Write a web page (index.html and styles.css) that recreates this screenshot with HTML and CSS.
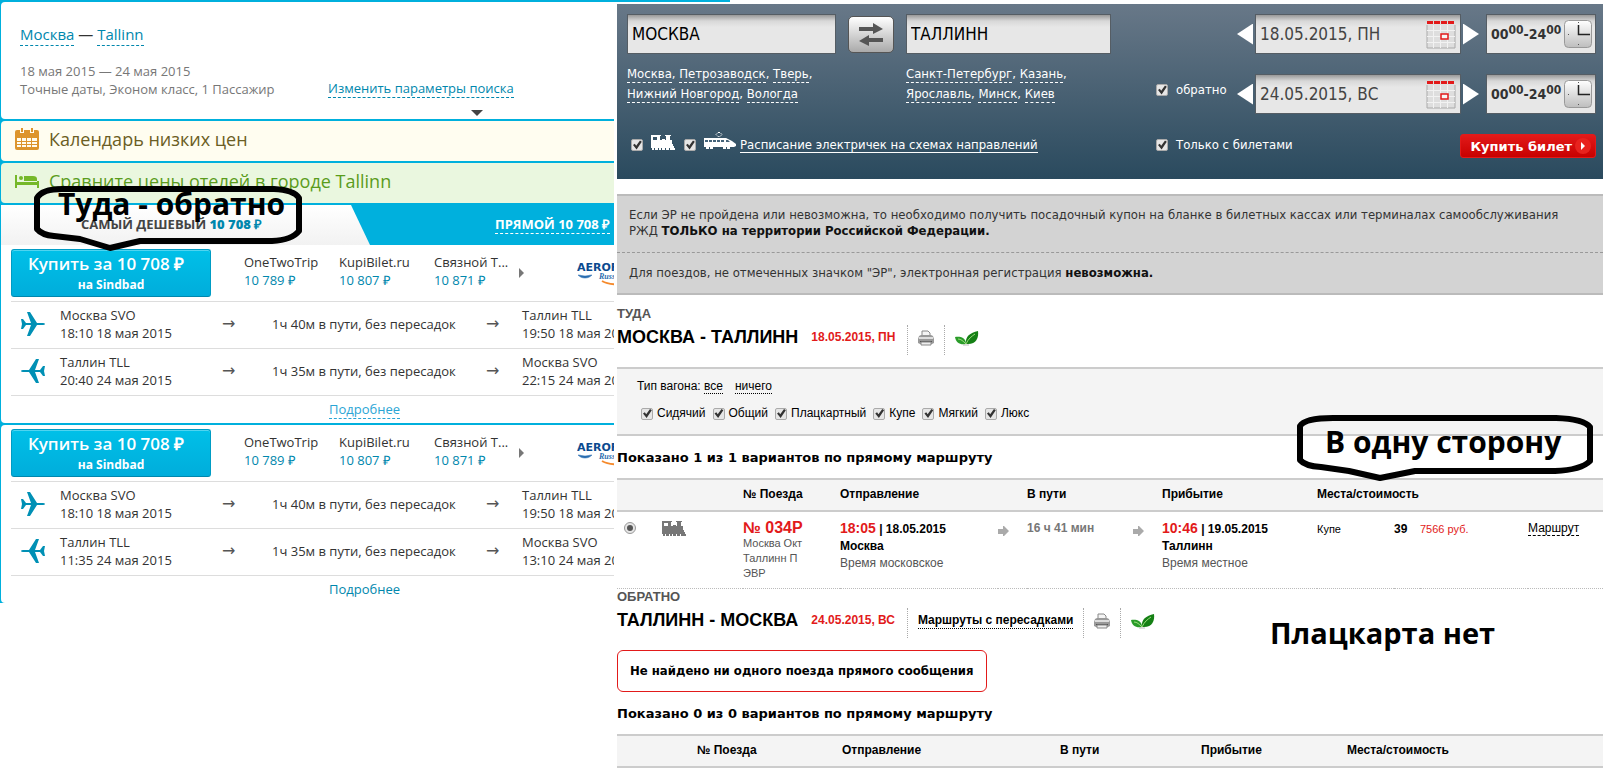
FILE: index.html
```
<!DOCTYPE html>
<html lang="ru">
<head>
<meta charset="utf-8">
<title>Москва — Таллинн: билеты</title>
<link rel="stylesheet" href="styles.css">
</head>
<body>
<svg class="defs" aria-hidden="true">
  <symbol id="plane" viewBox="0 0 24 24"><path d="M0 7h2l3 4h5L6 0h3l7 11h5c1.700 0 3 .4 3 1s-1.300 1-3 1h-5L9 24H6l4-11H5l-3 4H0l1-5z"/></symbol>
  <symbol id="loco" viewBox="0 0 25 15"><path d="M0 0h10v1H9v4h2V4h3v1h1V1h-1V0h6v1h-1v4h2v4h1v2h1v2h1v2h-5v-2h-1v2h-3v-2h-1v2h-3v-2h-1v2H8v-2H7v2H4v-2H3v2H1v-2H0zM2 2v3h4V2z" fill-rule="evenodd"/></symbol>
  <symbol id="arrow" viewBox="0 0 11 10"><path d="M0 3h5V0h1l5 5-5 5H5V8H0z"/></symbol>
  <symbol id="printer" viewBox="0 0 16 16"><path d="M4 6V1h6l2 2v3z" fill="#f4f4f4" stroke="#888"/><path d="M1 6l2-1h10l2 1 1 3v4l-2 1H2l-2-1V9z" fill="#999"/><path d="M1 7h14v2H1z" fill="#ddd"/><path d="M2 11h12v1H2z" fill="#555"/><path d="M3 12h10v3H3z" fill="#eee" stroke="#888"/></symbol>
  <symbol id="leaf" viewBox="0 0 24 16"><path d="M0 7c4-1 11 0 11 7C5 15 1 13 0 7z" fill="#2a9c2a"/><path d="M11 14C10 6 15 3 23 1c1 7-2 14-12 13z" fill="#158015"/><path d="M3 9c3 0 5 2 8 5 2-5 6-8 9-10" fill="none" stroke="#9bdc7a"/><path d="M8 15h6" stroke="#bbb"/></symbol>
  <symbol id="cal" viewBox="0 0 30 29"><path d="M1 5h28v23H1z" fill="#dedede"/><path d="M1 5v23h28V5" fill="none" stroke="#aaa"/><path d="M1 10.500h28M1 16.500h28M1 22.500h28M7.500 5v23M14.500 5v23M21.500 5v23" fill="none" stroke="#f2f2f2"/><path d="M1 1h6v3H1zM8 1h6v3H8zM15 1h6v3h-6zM22 1h6v3h-6z" fill="#e21a1a"/><path d="M15 14h7v5h-7z" fill="#f5f5f5" stroke="#e21a1a" stroke-width="1.500"/></symbol>
  <symbol id="clock" viewBox="0 0 28 28"><rect x=".5" y=".5" width="27" height="27" rx="4" fill="url(#metal)" stroke="#999"/><path d="M14.500 5v9.500H26" fill="none" stroke="#222" stroke-width="1.500"/><path d="M14 2h1v1h-1zM4 14h1v1H4zM14 24h1v1h-1z" fill="#555"/></symbol>
  <linearGradient id="metal" x2="0" y2="1"><stop stop-color="#fff"/><stop offset="1" stop-color="#bdbdbd"/></linearGradient>
  <symbol id="aeroflot" viewBox="0 0 60 26"><text x="0" y="11" font-family="DejaVu Sans" font-size="11" font-weight="700" fill="#0b4a8f">AEROFLOT</text><path d="M1 15c3 0 4 1 7 1 3 0 4-1 7-1-2 2-4 3-7 3s-5-1-7-3z" fill="#2a6db0" stroke="#2a6db0" stroke-width=".5"/><text x="22" y="19" font-family="Liberation Serif" font-style="italic" font-weight="700" font-size="8" fill="#2a6db0">Russian Airlines</text><path d="M25 21c5 3 12 4 22 3" fill="none" stroke="#f58a2c" stroke-width="2"/></symbol>
</svg>
<div class="topline"></div>
<div class="page">
<main class="avia">
  <section class="card search">
    <h1 class="route"><a href="#">Москва</a> — <a href="#">Tallinn</a></h1>
    <div class="params">
      <p>18 мая 2015 — 24 мая 2015<br>Точные даты, Эконом класс, 1 Пассажир</p>
      <a href="#">Изменить параметры поиска</a>
    </div>
    <i class="caret"></i>
  </section>
  <a class="card promo promo-cal" href="#">
    <svg width="24" height="22" viewBox="0 0 24 22"><path d="M0 4q0-2 2-2h20q2 0 2 2v16q0 2-2 2H2q-2 0-2-2z" fill="#dd952c"/><path d="M5 0h4v5H5zM15 0h4v5h-4z" fill="#fffdf0"/><path d="M6 0h2v4H6zM16 0h2v4h-2z" fill="#dd952c"/><path d="M2 10h20v9H2z" fill="#fffdf0"/><path d="M2 13h20v1H2zM2 16h20v1H2zM6 10h1v9H6zM11 10h1v9h-1zM16 10h1v9h-1z" fill="#dd952c"/></svg>
    <span>Календарь низких цен</span>
  </a>
  <a class="card promo promo-hotel" href="#">
    <svg width="24" height="22" viewBox="0 0 24 22" fill="#76b82a"><path d="M0 5h2v7h20v-1h2v7h-2v-3H2v3H0z"/><circle cx="6" cy="8" r="2"/><path d="M9 6h9q4 0 4 3v2H9z"/></svg>
    <span>Сравните цены отелей в городе Tallinn</span>
  </a>
  <nav class="tabs">
    <a class="tab tab-on" href="#">САМЫЙ ДЕШЕВЫЙ <b>10 708 ₽</b></a>
    <a class="tab tab-direct" href="#"><span>ПРЯМОЙ 10 708 ₽</span></a>
  </nav>
  <article class="card ticket">
    <div class="offers">
      <button class="buy"><span>Купить за 10 708 ₽</span><small>на Sindbad</small></button>
      <p>OneTwoTrip<br><a href="#">10 789 ₽</a></p>
      <p>KupiBilet.ru<br><a href="#">10 807 ₽</a></p>
      <p>Связной Т...<br><a href="#">10 871 ₽</a></p>
      <i class="more"></i>
      <svg width="60" height="26"><use href="#aeroflot"/></svg>
    </div>
    <div class="leg">
      <svg width="24" height="24"><use href="#plane"/></svg>
      <p>Москва SVO<br>18:10 18 мая 2015</p><i>→</i><p>1ч 40м в пути, без пересадок</p><i>→</i><p>Таллин TLL<br>19:50 18 мая 2015</p>
    </div>
    <div class="leg">
      <svg class="back" width="24" height="24"><use href="#plane"/></svg>
      <p>Таллин TLL<br>20:40 24 мая 2015</p><i>→</i><p>1ч 35м в пути, без пересадок</p><i>→</i><p>Москва SVO<br>22:15 24 мая 2015</p>
    </div>
    <div class="details"><a class="hover" href="#">Подробнее</a></div>
  </article>
  <article class="card ticket">
    <div class="offers">
      <button class="buy"><span>Купить за 10 708 ₽</span><small>на Sindbad</small></button>
      <p>OneTwoTrip<br><a href="#">10 789 ₽</a></p>
      <p>KupiBilet.ru<br><a href="#">10 807 ₽</a></p>
      <p>Связной Т...<br><a href="#">10 871 ₽</a></p>
      <i class="more"></i>
      <svg width="60" height="26"><use href="#aeroflot"/></svg>
    </div>
    <div class="leg">
      <svg width="24" height="24"><use href="#plane"/></svg>
      <p>Москва SVO<br>18:10 18 мая 2015</p><i>→</i><p>1ч 40м в пути, без пересадок</p><i>→</i><p>Таллин TLL<br>19:50 18 мая 2015</p>
    </div>
    <div class="leg">
      <svg class="back" width="24" height="24"><use href="#plane"/></svg>
      <p>Таллин TLL<br>11:35 24 мая 2015</p><i>→</i><p>1ч 35м в пути, без пересадок</p><i>→</i><p>Москва SVO<br>13:10 24 мая 2015</p>
    </div>
    <div class="details"><a href="#">Подробнее</a></div>
  </article>
</main>

<section class="rail">
  <form class="finder">
    <div class="places">
      <input class="field" type="text" value="МОСКВА" aria-label="Откуда">
      <button class="swap" type="button" aria-label="Поменять местами"><svg width="26" height="24" viewBox="0 0 26 24" fill="#555"><path d="M1 4h14V0l10 6-10 5V8H1zM25 15H11v-3L1 18l10 5v-4h14z"/></svg></button>
      <input class="field" type="text" value="ТАЛЛИНН" aria-label="Куда">
      <p class="cities"><a href="#">Москва</a>, <a href="#">Петрозаводск</a>, <a href="#">Тверь</a>,<br><a href="#">Нижний Новгород</a>, <a href="#">Вологда</a></p>
      <p class="cities cities-to"><a href="#">Санкт-Петербург</a>, <a href="#">Казань</a>,<br><a href="#">Ярославль</a>, <a href="#">Минск</a>, <a href="#">Киев</a></p>
      <div class="kinds">
        <input type="checkbox" checked aria-label="Поезда">
        <svg width="25" height="15" fill="#fff"><use href="#loco"/></svg>
        <input type="checkbox" checked aria-label="Электрички">
        <svg class="emu" width="32" height="18" viewBox="0 0 32 18"><path d="M14 .5h2l2 2-2 2h-2l-2-2z" fill="none" stroke="#fff" stroke-dasharray="2 1"/><path d="M0 6h22l6 3 4 3v2l-2 1H0z" fill="#fff"/><path d="M1 8h3v2H1zM5 8h3v2H5zM9 8h3v2H9zM13 8h3v2h-3zM17 8h3v2h-3zM22 8h2l2 2h-4z" fill="#45647a"/><path d="M2 15h3v2H2zM6 15h3v2H6zM19 15h3v2h-3zM23 15h3v2h-3z" fill="#fff"/></svg>
        <a href="#">Расписание электричек на схемах направлений</a>
      </div>
    </div>
    <div class="dates">
      <span></span>
      <button class="step prev" type="button" aria-label="Предыдущий день"></button>
      <div class="field datebox"><input type="text" value="18.05.2015, ПН" aria-label="Дата туда"><svg width="30" height="29"><use href="#cal"/></svg></div>
      <button class="step next" type="button" aria-label="Следующий день"></button>
      <button class="field time" type="button"><span>00<sup>00</sup>-24<sup>00</sup></span><svg width="28" height="28"><use href="#clock"/></svg></button>
      <label><input type="checkbox" checked>обратно</label>
      <button class="step prev" type="button" aria-label="Предыдущий день"></button>
      <div class="field datebox"><input type="text" value="24.05.2015, ВС" aria-label="Дата обратно"><svg width="30" height="29"><use href="#cal"/></svg></div>
      <button class="step next" type="button" aria-label="Следующий день"></button>
      <button class="field time" type="button"><span>00<sup>00</sup>-24<sup>00</sup></span><svg width="28" height="28"><use href="#clock"/></svg></button>
      <div class="submit">
        <label><input type="checkbox" checked>Только с билетами</label>
        <button class="go">Купить билет<svg width="16" height="16" viewBox="0 0 16 16"><circle cx="8" cy="8" r="8" fill="#e8221e"/><path d="M6 4l4 4-4 4z" fill="#fff"/></svg></button>
      </div>
    </div>
  </form>

  <div class="notice">
    <p>Если ЭР не пройдена или невозможна, то необходимо получить посадочный купон на бланке в билетных кассах или терминалах самообслуживания РЖД <b>ТОЛЬКО на территории Российской Федерации.</b></p>
    <p>Для поездов, не отмеченных значком "ЭР", электронная регистрация <b>невозможна.</b></p>
  </div>

  <h3 class="dir">ТУДА</h3>
  <div class="trip">
    <h2>МОСКВА - ТАЛЛИНН</h2><b class="date">18.05.2015, ПН</b>
    <a class="tool" href="#" aria-label="Печать"><svg width="16" height="16"><use href="#printer"/></svg></a>
    <a class="tool" href="#" aria-label="Экология"><svg width="24" height="16"><use href="#leaf"/></svg></a>
  </div>
  <div class="filter">
    <p>Тип вагона: <a href="#">все</a><a class="none" href="#">ничего</a></p>
    <div class="types">
      <label><input type="checkbox" checked>Сидячий</label>
      <label><input type="checkbox" checked>Общий</label>
      <label><input type="checkbox" checked>Плацкартный</label>
      <label><input type="checkbox" checked>Купе</label>
      <label><input type="checkbox" checked>Мягкий</label>
      <label><input type="checkbox" checked>Люкс</label>
    </div>
  </div>
  <h3 class="shown">Показано 1 из 1 вариантов по прямому маршруту</h3>
  <table class="trains">
    <colgroup><col class="w45"><col class="w81"><col class="w97"><col class="w158"><col class="w29"><col class="w106"><col class="w29"><col class="w155"><col class="w77"><col class="w26"><col class="w108"><col></colgroup>
    <thead><tr><th></th><th></th><th>№ Поезда</th><th>Отправление</th><th></th><th>В пути</th><th></th><th>Прибытие</th><th colspan="4">Места/стоимость</th></tr></thead>
    <tbody><tr>
      <td><input type="radio" name="train" checked aria-label="Поезд 034Р"></td>
      <td><svg class="loco" width="25" height="15"><use href="#loco"/></svg></td>
      <td><b class="num">№ 034Р</b><span class="line">Москва Окт Таллинн П ЭВР</span></td>
      <td><b><em>18:05</em> | 18.05.2015<br>Москва</b><br>Время московское</td>
      <td><svg class="arr" width="11" height="10"><use href="#arrow"/></svg></td>
      <td><b class="dur">16 ч 41 мин</b></td>
      <td><svg class="arr" width="11" height="10"><use href="#arrow"/></svg></td>
      <td><b><em>10:46</em> | 19.05.2015<br>Таллинн</b><br>Время местное</td>
      <td class="seat">Купе</td><td class="seat"><b>39</b></td><td class="seat price">7566 руб.</td>
      <td><a class="way" href="#">Маршрут</a></td>
    </tr></tbody>
  </table>

  <h3 class="dir">ОБРАТНО</h3>
  <div class="trip">
    <h2>ТАЛЛИНН - МОСКВА</h2><b class="date">24.05.2015, ВС</b>
    <span class="tool"><a class="change" href="#">Маршруты с пересадками</a></span>
    <a class="tool" href="#" aria-label="Печать"><svg width="16" height="16"><use href="#printer"/></svg></a>
    <a class="tool" href="#" aria-label="Экология"><svg width="24" height="16"><use href="#leaf"/></svg></a>
  </div>
  <p class="alert">Не найдено ни одного поезда прямого сообщения</p>
  <h3 class="shown">Показано 0 из 0 вариантов по прямому маршруту</h3>
  <table class="trains">
    <colgroup><col class="w80"><col class="w145"><col class="w218"><col class="w141"><col class="w146"><col></colgroup>
    <thead><tr><th></th><th>№ Поезда</th><th>Отправление</th><th>В пути</th><th>Прибытие</th><th>Места/стоимость</th></tr></thead>
  </table>
  <div class="callout one-way"><svg width="296" height="66" viewBox="0 0 296 66"><path d="M3 11Q8 3 36 3H259Q287 4 293 12V46Q284 55 258 56H118L83 63 52 56 24 52Q8 51 3 45z"/></svg><span>В одну сторону</span></div>
  <div class="callout no-seats"><span>Плацкарта нет</span></div>
</section>
</div>
<div class="callout round-trip"><svg width="268" height="66" viewBox="0 0 268 66"><path d="M3 12Q8 3 28 3H240Q260 4 265 12V45Q258 54 238 55H106L76 62 46 53 20 50Q8 49 3 43z"/></svg><span>Туда - обратно</span></div>
</body>
</html>
```

FILE: styles.css
```
* { box-sizing: border-box; }
body { margin: 0; background: #fff; position: relative; font: 13px/18px "Open Sans", sans-serif; color: #333; overflow-x: hidden; }
p, h1, h2, h3 { margin: 0; }
i, em { font-style: normal; }
button { border: 0; padding: 0; font: inherit; cursor: pointer; }
svg { display: block; flex: none; }
.defs { position: absolute; width: 0; height: 0; }
.topline { position: absolute; top: 0; left: 0; width: 730px; max-width: 100%; height: 2px; background: #00b0dd; }
.page { display: grid; grid-template-columns: minmax(0, 614fr) minmax(0, 986fr); gap: 3px; align-items: start; }

.avia { background: #00b0dd; padding: 2px 0 0 1px; display: flex; flex-direction: column; gap: 2px; overflow: hidden; white-space: nowrap; }
.avia a { color: #0087ad; text-decoration: none; }
.card { background: #fff; border-radius: 4px 0 0 4px; }
.search { height: 117px; padding: 21px 0 0 19px; position: relative; }
.route { font-size: 15px; line-height: 22px; font-weight: 400; }
.route a, .params a { border-bottom: 1px dashed #0087ad; }
.avia .route a { padding-bottom: 1px; }
.params { display: flex; align-items: flex-end; margin-top: 17px; color: #777; }
.params p { width: 308px; }
.caret { position: absolute; left: 470px; bottom: 3px; border: 6px solid transparent; border-top-color: #444; border-bottom-width: 0; }
.promo { height: 40px; display: flex; align-items: center; gap: 10px; padding: 0 14px 4px; font-size: 18px; }
.avia .promo-cal { background: #fffdf0; color: #6b5d24; }
.avia .promo-hotel { background: #eaf7df; color: #5a9c1c; }
.tabs { height: 40px; display: flex; font-weight: 700; line-height: 38px; }
.tab-on { width: 369px; padding-left: 80px; background: linear-gradient(#fff, #f2f2f2); clip-path: polygon(0 0, 350px 0, 100% 100%, 0 100%); }
.avia .tab-on { color: #444; }
.tab-on b { color: #0087ad; }
.tab-direct { padding-left: 125px; }
.tab-direct span { color: #fff; border-bottom: 1px dashed #fff; }
.tabs + .ticket { margin-top: -2px; border-top-left-radius: 0; }
.ticket { padding: 4px 0 0 10px; height: 178px; }
.offers { display: grid; grid-template-columns: 233px 95px 95px 85px 58px 60px; height: 53px; padding-bottom: 4px; align-items: center; border-bottom: 1px solid #ddd; }
.offers p { padding-bottom: 4px; }
.buy { width: 200px; height: 48px; border: 1px solid #009cc4; border-bottom-color: #0087ad; border-radius: 3px; background: linear-gradient(#00c0e8, #00addb); box-shadow: inset 0 1px #4fd4f0; color: #fff; font-weight: 600; }
.buy span { display: block; font-size: 17px; line-height: 24px; padding-right: 10px; }
.buy small { display: block; font-size: 12px; font-weight: 700; line-height: 18px; }
.more { border: 5px solid transparent; border-left-color: #777; border-right-width: 0; width: 5px; }
.leg { display: grid; grid-template-columns: 39px 162px 50px 214px 36px 110px; height: 47px; padding: 0 0 2px 10px; align-items: center; border-bottom: 1px solid #ddd; }
.leg svg { fill: #0090b5; }
.leg .back { transform: scaleX(-1); }
.leg i { font-size: 16px; color: #555; font-family: "DejaVu Sans", sans-serif; }
.details { padding: 4px 0 0 318px; line-height: 18px; }
.avia .hover { color: #2aa5d5; border-bottom: 1px dashed #2aa5d5; }

.rail { position: relative; padding-top: 4px; font: 12px/15px "Liberation Sans", sans-serif; color: #000; }
.rail a { color: inherit; text-decoration: none; }
.finder { min-height: 175px; padding: 10px 7px 0 10px; background: linear-gradient(#687888, #2a4a5e); display: flex; justify-content: space-between; font: 13px/20px "DejaVu Sans Condensed", sans-serif; color: #fff; }
.places { display: grid; grid-template-columns: 209px 70px 205px; align-content: start; }
.field { height: 40px; border: 1px solid #555d64; border-radius: 0; background: linear-gradient(#999, #d8d8d8 6px, #e7e7e7 12px); font: 17px "DejaVu Sans Condensed", sans-serif; color: #000; padding: 0 4px; width: 100%; min-width: 0; }
.swap { width: 46px; height: 37px; margin: 2px 0 0 12px; border: 1px solid #555; border-radius: 5px; background: linear-gradient(#fff, #aaa); display: grid; place-items: center; }
.cities { grid-column: 1 / 3; padding-top: 10px; white-space: nowrap; }
.cities-to { grid-column: 3; }
.cities a { display: inline-block; line-height: 16px; }
.rail .cities a { border-bottom: 1px dashed #fff; }
.kinds { grid-column: 1 / 4; display: flex; align-items: center; padding: 33px 0 0 4px; gap: 8px; white-space: nowrap; }
.kinds a { border-bottom: 1px solid #fff; line-height: 15px; margin-left: -4px; }
.rail .kinds svg { margin-top: -5px; }
.rail .kinds .emu { margin-top: -9px; }
input[type=checkbox], input[type=radio] { appearance: none; margin: 0; width: 12px; height: 12px; border: 1px solid #aaa; border-radius: 2px; background: #e6e6e6; display: grid; place-items: center; flex: none; }
input[type=checkbox]:checked::before { content: ""; width: 10px; height: 10px; background: #333; clip-path: polygon(10% 50%, 28% 38%, 42% 58%, 80% 5%, 98% 18%, 46% 95%); }
input[type=radio] { border-radius: 50%; border-color: #999; }
input[type=radio]:checked::before { content: ""; width: 6px; height: 6px; border-radius: 50%; background: #555; }
.dates { display: grid; grid-template-columns: 81px 18px 206px 18px 117px; grid-template-rows: 40px 40px 24px; row-gap: 20px; align-content: start; align-items: center; }
.dates label { display: flex; align-items: center; gap: 8px; padding-bottom: 8px; }
.step { width: 16px; height: 21px; background: #fff; }
.prev { clip-path: polygon(100% 0, 100% 100%, 0 50%); }
.next { clip-path: polygon(0 0, 100% 50%, 0 100%); justify-self: end; }
.datebox { display: flex; align-items: center; }
.datebox input { flex: 1; min-width: 0; border: 0; padding: 0; background: none; font: 17px "DejaVu Sans Condensed", sans-serif; color: #444; }
.time { width: 110px; justify-self: end; display: flex; align-items: center; justify-content: space-between; padding: 0 3px 0 4px; font: bold 14px "DejaVu Sans Condensed", sans-serif; color: #333; }
.time sup { font-size: 12px; line-height: 0; vertical-align: 5px; }
.submit { grid-column: 1 / 6; display: flex; justify-content: space-between; align-items: center; }
.submit label { padding: 0 0 2px; }
.go { height: 24px; padding: 0 4px 0 9px; border: 1px solid #e21a1a; border-radius: 3px; background: linear-gradient(#e21a1a, #c80000); color: #fff; font: bold 13px "DejaVu Sans", sans-serif; display: flex; align-items: center; gap: 3px; }

.notice { margin-top: 15px; border: solid #bbb; border-width: 2px 0; background: #d3d3d3; font: 13px/16px "DejaVu Sans Condensed", sans-serif; color: #333; }
.notice p { padding: 11px 40px 13px 12px; }
.notice p + p { border-top: 1px dashed #999; padding: 12px; }
.notice b { color: #111; }
.dir { font: bold 13px/16px "Liberation Sans", sans-serif; color: #555; }
.notice + .dir { margin-top: 11px; }
.trip { display: flex; align-items: center; height: 30px; margin: 3px 0 12px; white-space: nowrap; }
.trip h2 { font: bold 18px/30px "Liberation Sans", sans-serif; padding-bottom: 6px; margin-right: 13px; }
.date { color: #e21a1a; margin-right: 12px; padding-bottom: 5px; font-size: 12px; }
.tool { height: 30px; border-left: 1px dotted #aaa; padding: 0 10px 5px; display: flex; align-items: center; }
.rail .change { font-weight: 700; border-bottom: 1px dotted #000; }
.filter { border: solid #ccc; border-width: 2px 0; background: #f4f4f4; padding: 10px 20px 13px; }
.filter a { border-bottom: 1px dotted #000; }
.filter .none { margin-left: 12px; }
.types { display: flex; gap: 7px; margin-top: 12px; padding-left: 4px; }
.types label { display: flex; align-items: center; gap: 4px; }
.shown { font: bold 13px/16px "DejaVu Sans", sans-serif; padding: 14px 0 12px; }
.trains { width: 100%; table-layout: fixed; border-collapse: separate; border-spacing: 0; }
.trains th { height: 34px; padding: 0 0 2px; border: solid #ccc; border-width: 2px 0; background: #f4f4f4; text-align: left; white-space: nowrap; }
.trains td { height: 77px; padding: 8px 0 0; vertical-align: top; border-bottom: 1px dotted #bbb; color: #555; line-height: 17px; white-space: nowrap; }
.trains td b { color: #000; }
.trains td em { color: #e21a1a; font-size: 14px; }
.trains .num { display: block; color: #e21a1a; font-size: 16px; line-height: 16px; }
.line { display: block; font-size: 11px; line-height: 15px; white-space: normal; width: 60px; }
.loco { fill: #777; margin-top: 1px; }
.arr { fill: #aaa; margin-top: 6px; }
.trains .dur { color: #777; }
.trains .seat { font-size: 11px; padding-top: 9px; color: #000; }
.seat b { font-size: 12px; }
.trains .price { color: #e21a1a; }
.rail .way { color: #000; border-bottom: 1px dashed #000; }
.rail input[type=radio] { margin: 2px 0 0 7px; }
.w45 { width: 45px; } .w81 { width: 81px; } .w97 { width: 97px; } .w158 { width: 158px; }
.w29 { width: 29px; } .w106 { width: 106px; } .w155 { width: 155px; } .w77 { width: 77px; }
.w26 { width: 26px; } .w108 { width: 108px; } .w80 { width: 80px; } .w145 { width: 145px; }
.w218 { width: 218px; } .w141 { width: 141px; } .w146 { width: 146px; }
.alert { display: inline-block; border: 1px solid #e21a1a; border-radius: 6px; padding: 12px; font: bold 13px/16px "DejaVu Sans Condensed", sans-serif; }
.callout { position: absolute; color: #000; font: bold 30px/36px "Open Sans", sans-serif; white-space: nowrap; }
.callout svg { fill: none; stroke: #000; stroke-width: 6; stroke-linejoin: round; }
.callout span { position: absolute; }
.round-trip { left: 34px; top: 186px; }
.round-trip span { left: 24px; top: 0; }
.one-way { right: 10px; top: 415px; }
.one-way span { left: 28px; top: 9px; }
.no-seats { left: 653px; top: 615px; font-size: 29px; }
```
